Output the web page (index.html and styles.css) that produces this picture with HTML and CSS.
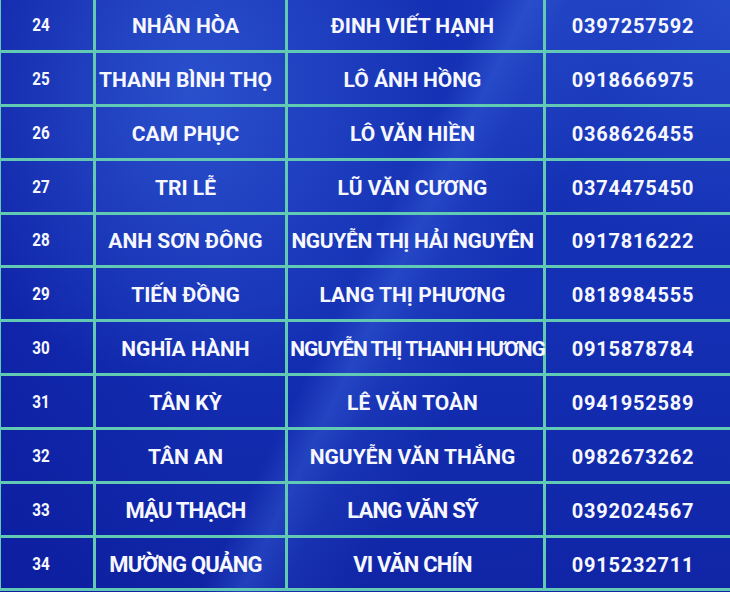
FILE: index.html
```html
<!DOCTYPE html>
<html lang="vi">
<head>
<meta charset="utf-8">
<title>Danh sách</title>
<link rel="stylesheet" href="styles.css">
</head>
<body>
<div class="board">
  <div class="row"><div class="cell c-no"><span class="no">24</span></div><div class="cell c-place">NHÂN HÒA</div><div class="cell c-name">ĐINH VIẾT HẠNH</div><div class="cell c-phone">0397257592</div></div>
  <div class="row"><div class="cell c-no"><span class="no">25</span></div><div class="cell c-place">THANH BÌNH THỌ</div><div class="cell c-name">LÔ ÁNH HỒNG</div><div class="cell c-phone">0918666975</div></div>
  <div class="row"><div class="cell c-no"><span class="no">26</span></div><div class="cell c-place">CAM PHỤC</div><div class="cell c-name">LÔ VĂN HIỀN</div><div class="cell c-phone">0368626455</div></div>
  <div class="row"><div class="cell c-no"><span class="no">27</span></div><div class="cell c-place">TRI LỄ</div><div class="cell c-name">LŨ VĂN CƯƠNG</div><div class="cell c-phone">0374475450</div></div>
  <div class="row"><div class="cell c-no"><span class="no">28</span></div><div class="cell c-place">ANH SƠN ĐÔNG</div><div class="cell c-name tight">NGUYỄN THỊ HẢI NGUYÊN</div><div class="cell c-phone">0917816222</div></div>
  <div class="row"><div class="cell c-no"><span class="no">29</span></div><div class="cell c-place">TIẾN ĐỒNG</div><div class="cell c-name">LANG THỊ PHƯƠNG</div><div class="cell c-phone">0818984555</div></div>
  <div class="row"><div class="cell c-no"><span class="no">30</span></div><div class="cell c-place">NGHĨA HÀNH</div><div class="cell c-name tighter">NGUYỄN THỊ THANH HƯƠNG</div><div class="cell c-phone">0915878784</div></div>
  <div class="row"><div class="cell c-no"><span class="no">31</span></div><div class="cell c-place">TÂN KỲ</div><div class="cell c-name">LÊ VĂN TOÀN</div><div class="cell c-phone">0941952589</div></div>
  <div class="row"><div class="cell c-no"><span class="no">32</span></div><div class="cell c-place">TÂN AN</div><div class="cell c-name">NGUYỄN VĂN THẮNG</div><div class="cell c-phone">0982673262</div></div>
  <div class="row narrow"><div class="cell c-no"><span class="no">33</span></div><div class="cell c-place">MẬU THẠCH</div><div class="cell c-name">LANG VĂN SỸ</div><div class="cell c-phone">0392024567</div></div>
  <div class="row narrow"><div class="cell c-no"><span class="no">34</span></div><div class="cell c-place">MƯỜNG QUẢNG</div><div class="cell c-name">VI VĂN CHÍN</div><div class="cell c-phone">0915232711</div></div>
</div>
</body>
</html>
```

FILE: styles.css
```css
html, body {
  margin: 0;
  padding: 0;
  width: 730px;
  height: 592px;
  overflow: hidden;
}

body {
  background-color: #1430b4;
  background-image:
    radial-gradient(ellipse 260px 300px at 190px 90px, rgba(70, 120, 235, 0.45), rgba(70, 120, 235, 0) 100%),
    linear-gradient(116deg, rgba(0,0,0,0) 0%, rgba(0,0,0,0) 48%, rgba(75, 125, 240, 0.30) 52%, rgba(75, 125, 240, 0.12) 56%, rgba(0,0,0,0) 64%),
    radial-gradient(ellipse 300px 260px at 730px 0px, rgba(60, 110, 230, 0.40), rgba(60, 110, 230, 0) 100%),
    linear-gradient(180deg, rgba(8, 16, 140, 0) 50%, rgba(8, 16, 140, 0.35) 100%),
    linear-gradient(90deg, rgba(8, 16, 150, 0.35) 0%, rgba(8, 16, 150, 0) 30%);
  font-family: Roboto, "Liberation Sans", Arial, sans-serif;
  color: #f7f8ff;
}

.board {
  margin: -3.85px 0 0 -2px;
  width: 740px;
  border-top: 3px solid #62cab3;
  border-left: 3px solid #62cab3;
  display: flex;
  flex-direction: column;
}

.row {
  display: grid;
  grid-template-columns: 95px 192px 258px 195px;
  height: 53.85px;
}

.cell {
  box-sizing: border-box;
  border-right: 3px solid #62cab3;
  border-bottom: 3px solid #62cab3;
  display: flex;
  align-items: center;
  justify-content: center;
  white-space: nowrap;
  font-weight: 700;
  padding-top: 3px;
}

.c-no {
  padding-right: 12px;
  padding-top: 0;
}

.no {
  display: inline-block;
  font-size: 19px;
  transform: scaleX(0.8);
}

.c-place {
  font-size: 21px;
  padding-right: 10px;
}

.c-name {
  font-size: 21px;
  padding-right: 6px;
}

.c-name.tight {
  letter-spacing: -0.35px;
}

.c-name.tighter {
  letter-spacing: -1px;
  padding-right: 0;
  padding-left: 4px;
}

.c-phone {
  font-size: 20px;
  letter-spacing: 0.8px;
  padding-right: 18px;
}

.narrow .c-place,
.narrow .c-name {
  font-size: 22px;
  letter-spacing: -0.8px;
}
```
